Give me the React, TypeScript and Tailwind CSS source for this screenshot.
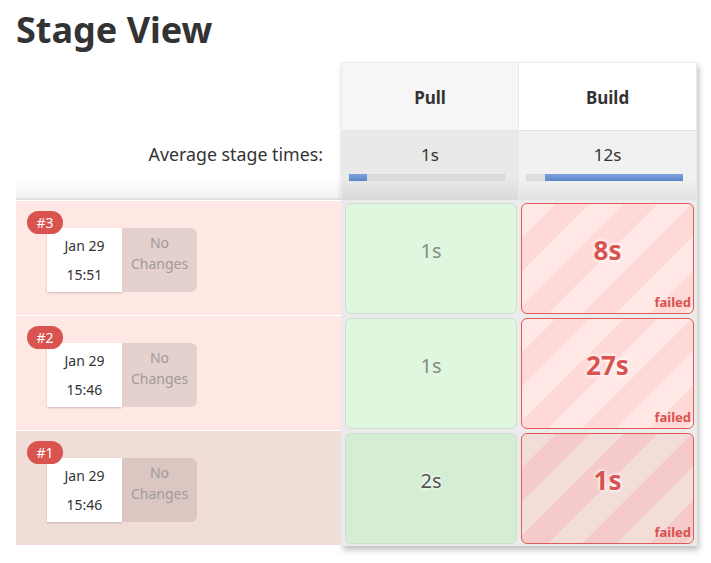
import React from "react";

const font = { fontFamily: '"Noto Sans", "Open Sans", Arial, sans-serif' };

type Row = {
  n: string;
  time: string;
  pull: string;
  build: string;
  dark: boolean;
};

const rows: Row[] = [
  { n: "#3", time: "15:51", pull: "1s", build: "8s", dark: false },
  { n: "#2", time: "15:46", pull: "1s", build: "27s", dark: false },
  { n: "#1", time: "15:46", pull: "2s", build: "1s", dark: true },
];

function LeftRow({ r }: { r: Row }) {
  return (
    <div
      className={`relative h-[115px] border-t border-white ${
        r.dark ? "bg-[#f0ddd8]" : "bg-[#ffe8e4]"
      }`}
    >
      <div className="absolute left-[11px] top-[10px] z-10 h-[23px] w-[36px] rounded-full bg-[#d9534f] text-center text-[14px] leading-[23px] text-white">
        {r.n}
      </div>
      <div className="absolute left-[31px] top-[27px] flex h-[64px]">
        <div className="flex w-[75px] flex-col items-center justify-center gap-[8px] bg-white pb-[1px] text-[14px] leading-[21px] text-[#333] shadow-[0_1px_2px_rgba(0,0,0,0.2)]">
          <div>Jan 29</div>
          <div>{r.time}</div>
        </div>
        <div
          className={`flex w-[75px] flex-col items-center justify-start rounded-r-[6px] pt-[4px] text-center text-[14px] leading-[21px] text-[#a09a99] ${
            r.dark ? "bg-[#dbc6c2]" : "bg-[#e4d0cd]"
          }`}
        >
          <div>No</div>
          <div>Changes</div>
        </div>
      </div>
    </div>
  );
}

function PullCell({ r }: { r: Row }) {
  return (
    <div className="h-[115px] pb-[1px] pl-[3px] pr-[2px] pt-[3px]">
      <div
        className={`flex h-full items-center justify-center rounded-[6px] border border-[#cfdccf] pb-[16px] text-[20px] ${
          r.dark ? "bg-[#d4edd3] text-[#555]" : "bg-[#dff7de] text-[#8a8a8a]"
        }`}
        style={r.dark ? { textShadow: "0 0 4px #fff, 0 0 4px #fff" } : undefined}
      >
        {r.pull}
      </div>
    </div>
  );
}

function BuildCell({ r }: { r: Row }) {
  const bg = r.dark
    ? "repeating-linear-gradient(135deg, #f2ddd8 0px, #f2ddd8 24px, #f4caca 24px, #f4caca 48px)"
    : "repeating-linear-gradient(135deg, #ffe8e5 0px, #ffe8e5 24px, #ffd8d8 24px, #ffd8d8 48px)";
  return (
    <div className="h-[115px] pb-[1px] pl-[2px] pr-[2px] pt-[3px]">
      <div
        className="relative flex h-full items-center justify-center rounded-[6px] border border-[#e15a57] pb-[16px] text-[26px] font-bold text-[#d9534f]"
        style={{ backgroundImage: bg, textShadow: "0 0 4px #fff, 0 0 4px #fff" }}
      >
        {r.build}
        <div
          className="absolute bottom-[3px] right-[2px] text-[13px] font-bold leading-[16px] text-[#d9534f]"
          style={{ textShadow: "none" }}
        >
          failed
        </div>
      </div>
    </div>
  );
}

export default function App() {
  return (
    <div className="min-h-[563px] w-[711px] bg-white pl-[16px] pt-[4px]" style={font}>
      <h1 className="h-[58px] text-[36px] font-bold leading-[52px] text-[#333]">Stage View</h1>
      <div className="flex">
        <div className="w-[325px]">
          <div className="h-[68px]" />
          <div className="flex h-[70px] items-center justify-end border-b-2 border-[#e4dedd] bg-gradient-to-b from-white from-70% to-[#f2f2f2] pb-[20px] pr-[18px] text-[17.8px] text-[#333]">
            Average stage times:
          </div>
          {rows.map((r) => (
            <LeftRow key={r.n} r={r} />
          ))}
        </div>
        <div className="w-[356px] border border-[#e6eaeb] bg-[#ebebeb] shadow-[2px_4px_6px_rgba(0,0,0,0.25)]">
          <div className="flex h-[67px]">
            <div className="flex w-[177px] items-center justify-center border-r border-[#e6eaeb] bg-[#f6f6f6] pt-[2px] text-[17px] font-bold text-[#333]">
              Pull
            </div>
            <div className="flex flex-1 items-center justify-center bg-white pt-[2px] text-[17px] font-bold text-[#333]">
              Build
            </div>
          </div>
          <div className="flex h-[70px] border-t border-[#e2e2e2]">
            <div className="flex w-[177px] flex-col items-center border-r border-[#e6eaeb] bg-gradient-to-b from-[#e9e9e9] from-70% to-[#d9d9d9] pl-[7px] pr-[13px] pt-[13px]">
              <div className="pl-[6px] text-[17px] leading-[22px] text-[#333]">1s</div>
              <div className="mt-[8px] h-[7px] w-full bg-[#dcdcdc] shadow-[inset_0_0_1px_rgba(0,0,0,0.2)]">
                <div className="h-full w-[18px] bg-gradient-to-b from-[#7ea2dc] to-[#5a86c8]" />
              </div>
            </div>
            <div className="flex flex-1 flex-col items-center bg-gradient-to-b from-[#f1f1f1] from-70% to-[#e2e2e2] pl-[7px] pr-[13px] pt-[13px]">
              <div className="pl-[6px] text-[17px] leading-[22px] text-[#333]">12s</div>
              <div className="mt-[8px] h-[7px] w-full bg-[#e0e0e0] shadow-[inset_0_0_1px_rgba(0,0,0,0.2)]">
                <div className="ml-auto h-full w-[138px] bg-gradient-to-b from-[#7ea2dc] to-[#5a86c8]" />
              </div>
            </div>
          </div>
          {rows.map((r) => (
            <div key={r.n} className="flex">
              <div className="w-[177px]">
                <PullCell r={r} />
              </div>
              <div className="flex-1">
                <BuildCell r={r} />
              </div>
            </div>
          ))}
        </div>
      </div>
    </div>
  );
}
